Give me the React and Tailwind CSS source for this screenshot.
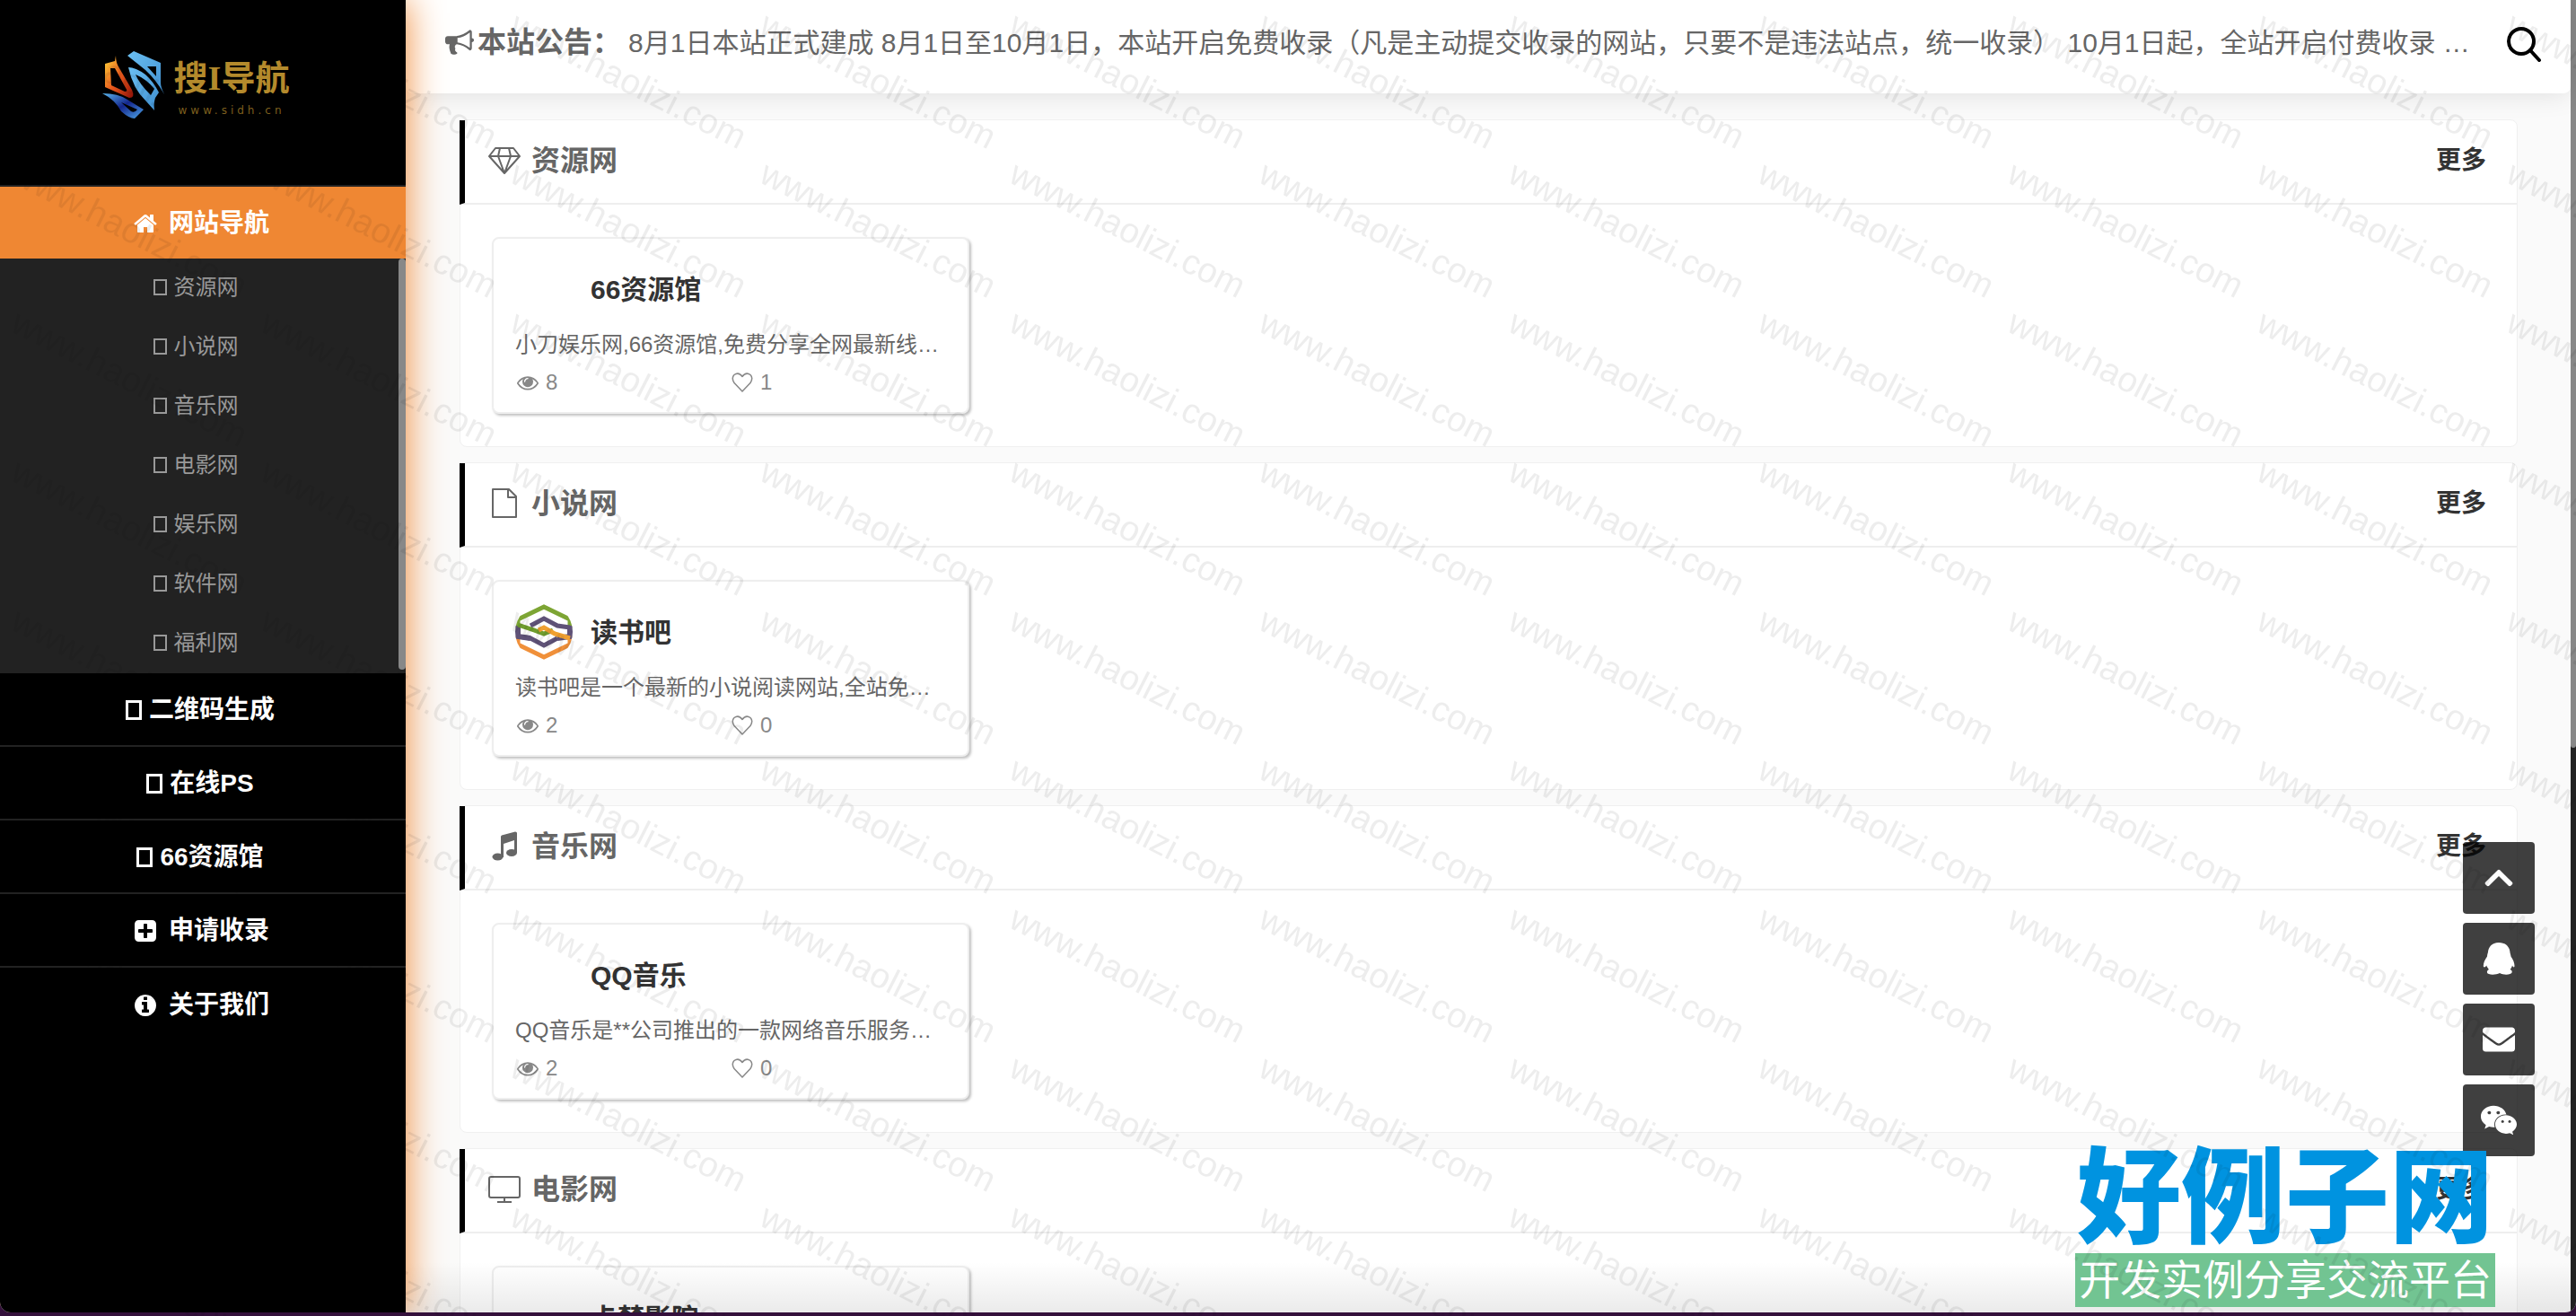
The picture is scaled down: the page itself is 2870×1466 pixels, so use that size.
import { FaChevronUp, FaEnvelope, FaWeixin } from 'react-icons/fa';

const SUB_LINKS = ['资源网', '小说网', '音乐网', '电影网', '娱乐网', '软件网', '福利网'];

const NAV_LINKS = [
  { label: '二维码生成' },
  { label: '在线PS' },
  { label: '66资源馆' },
  { label: '申请收录', icon: 'plus' },
  { label: '关于我们', icon: 'info' },
];

const SECTIONS = [
  {
    title: '资源网',
    icon: 'diamond',
    site: { name: '66资源馆', desc: '小刀娱乐网,66资源馆,免费分享全网最新线…', views: 8, likes: 1 },
  },
  {
    title: '小说网',
    icon: 'file',
    site: { name: '读书吧', desc: '读书吧是一个最新的小说阅读网站,全站免…', views: 2, likes: 0, logo: true },
  },
  {
    title: '音乐网',
    icon: 'music',
    site: { name: 'QQ音乐', desc: 'QQ音乐是**公司推出的一款网络音乐服务…', views: 2, likes: 0 },
  },
  {
    title: '电影网',
    icon: 'monitor',
    site: { name: '卡梦影院' },
  },
];

const QqIcon = (props) => (
  <svg viewBox="0 0 36 36" width="1em" height="1em" fill="currentColor" {...props}>
    <path d="M18 0c8 0 12 5 12.500 11c0 1 .8 2 1 4.500c2.500 3.500 4 7 4 10.500c0 2-1.500 2-2.500-.5c-.6 2-1.500 3.500-2.500 4.500c2 .8 2.500 2 2 3.500c-1 2.500-9 3-13.500 .5c-5 2.500-13.500 2-14 -.5c-.3-1.500 .2-2.700 2-3.500c-1.200-1.200-2.200-3-2.800-4.500c-1.200 2.500-3.400 2.500-3.400 .5c0-3.500 1.700-7 4.200-10.500c.1-2.500 .7-3.500 .9-4.500C6.500 5 10 0 18 0z" />
  </svg>
);

const FLOAT_BUTTONS = [
  { label: '返回顶部', Icon: FaChevronUp },
  { label: 'QQ', Icon: QqIcon },
  { label: '邮箱', Icon: FaEnvelope },
  { label: '微信', Icon: FaWeixin, large: true },
];

// Solid glyphs, all on a 1792 grid
const GLYPHS = {
  home: 'M1472 992v480q0 26-19 45t-45 19h-384v-384h-256v384h-384q-26 0-45-19t-19-45v-480q0-1 .5-3t.5-3l575-474 575 474q1 2 1 6zm223-69l-62 74q-8 9-21 11h-3q-13 0-21-7l-692-577-692 577q-12 8-24 7-13-2-21-11l-62-74q-8-10-7-23.5t11-21.5l719-599q32-26 76-26t76 26l244 204v-195q0-14 9-23t23-9h192q14 0 23 9t9 23v408l219 182q10 8 11 21.5t-7 23.5z',
  plus: 'M1408 960v-128q0-26-19-45t-45-19h-320v-320q0-26-19-45t-45-19h-128q-26 0-45 19t-19 45v320h-320q-26 0-45 19t-19 45v128q0 26 19 45t45 19h320v320q0 26 19 45t45 19h128q26 0 45-19t19-45v-320h320q26 0 45-19t19-45zm256-544v960q0 119-84.5 203.5t-203.5 84.500h-960q-119 0-203.5-84.500t-84.500-203.500v-960q0-119 84.500-203.500t203.500-84.500h960q119 0 203.500 84.500t84.500 203.500z',
  info: 'M1152 1376v-160q0-14-9-23t-23-9h-96v-512q0-14-9-23t-23-9h-320q-14 0-23 9t-9 23v160q0 14 9 23t23 9h96v320h-96q-14 0-23 9t-9 23v160q0 14 9 23t23 9h448q14 0 23-9t9-23zm-128-896v-160q0-14-9-23t-23-9h-192q-14 0-23 9t-9 23v160q0 14 9 23t23 9h192q14 0 23-9t9-23zm640 416q0 209-103 385.5t-279.5 279.5-385.5 103-385.5-103-279.5-279.5-103-385.5 103-385.5 279.5-279.5 385.5-103 385.5 103 279.5 279.5 103 385.5z',
  bullhorn: 'M1664 640q53 0 90.5 37.5t37.5 90.5-37.5 90.5-90.5 37.5v384q0 52-38 90t-90 38q-417-347-812-380-58 19-91 66t-31 100.5 40 92.5q-20 33-23 65.5t6 58 33.5 55 48 50 61.5 50.5q-29 58-111.5 83t-168.5 11.5-132-55.5q-7-23-29.5-87.5t-32-94.5-23-89-15-101 3.5-98.5 22-110.5h-122q-66 0-113-47t-47-113v-192q0-66 47-113t113-47h480q435 0 896-384 52 0 90 38t38 90v384zm-128 604v-954q-394 302-768 343v270q377 42 768 341z',
  eye: 'M1664 960q-152-236-381-353 61 104 61 225 0 185-131.5 316.5t-316.5 131.5-316.5-131.5-131.5-316.5q0-121 61-225-229 117-381 353 133 205 333.5 326.5t434.5 121.5 434.5-121.5 333.5-326.5zm-720-384q0-20-14-34t-34-14q-125 0-214.5 89.5t-89.5 214.5q0 20 14 34t34 14 34-14 14-34q0-86 61-147t147-61q20 0 34-14t14-34zm848 384q0 34-20 69-140 230-376.5 368.5t-499.5 138.5-499.5-139-376.5-368q-20-35-20-69t20-69q140-229 376.5-368t499.5-139 499.5 139 376.5 368q20 35 20 69z',
};

const Glyph = ({ name, className }) => (
  <svg viewBox="0 0 1792 1792" fill="currentColor" className={className} aria-hidden="true">
    <path d={GLYPHS[name]} />
  </svg>
);

// Thin outline icons used in the section headings
const SectionIcon = ({ name }) => (
  <svg viewBox="0 0 36 36" className="size-9" fill="none" stroke="currentColor" strokeWidth="2" strokeLinejoin="round" aria-hidden="true">
    {name === 'diamond' && <path d="M8 4h20l7 9-17 19L1 13zM1 13h34M13 4l-2 9 7 19 7-19-2-9" />}
    {name === 'file' && <path d="M5 2h18l8 8v23H5zM22 2v9h9" />}
    {name === 'music' && (
      <g fill="currentColor" stroke="none">
        <path d="M14 7q0-1 1-1.500l15-4q2 0 2 1.500v22h-3V11l-12 4v15h-3z" />
        <ellipse cx="10.500" cy="29.500" rx="6" ry="4" />
        <ellipse cx="26" cy="25" rx="6" ry="4" />
      </g>
    )}
    {name === 'monitor' && <path d="M3 4h30q2 0 2 2v19q0 2-2 2H3q-2 0-2-2V6q0-2 2-2zM18 27v5M10 32h16" />}
  </svg>
);

const HeartIcon = () => (
  <svg viewBox="0 0 24 24" className="size-6" fill="none" stroke="currentColor" strokeWidth="1.5" strokeLinejoin="round" aria-hidden="true">
    <path d="M12 22L3 12.500Q-.5 7 3 3.500q5-3.500 9 2q4-5.500 9-2q3.500 3.500 0 9z" />
  </svg>
);

const Tofu = ({ className }) => <span className={`inline-block border-current ${className}`} />;

const Logo = () => (
  <a href="#" className="flex h-[206px] items-center justify-center gap-2 pb-4 pr-4">
    <svg viewBox="0 0 72 76" className="h-[76px] w-[72px]" aria-hidden="true">
      <defs>
        <linearGradient id="fire" x1="0" y1="0" x2="1" y2="1">
          <stop offset="0" stopColor="#ffd83a" />
          <stop offset=".5" stopColor="#e8591c" />
          <stop offset="1" stopColor="#8d1008" />
        </linearGradient>
        <linearGradient id="deep" x1="0" y1="0" x2="1" y2="1">
          <stop offset="0" stopColor="#5bb8f0" />
          <stop offset=".5" stopColor="#14268c" />
          <stop offset="1" stopColor="#4fa8ea" />
        </linearGradient>
        <linearGradient id="sky" x1="0" y1="0" x2="1" y2="1">
          <stop offset="0" stopColor="#6cc0f2" />
          <stop offset="1" stopColor="#3f8fd0" />
        </linearGradient>
      </defs>
      <path fillRule="evenodd" fill="url(#fire)" d="M15 5q0 8 4 14l14 24q4 9-3 9L3 40V14l11-3zM9 19l1 19 15 7q4 0 1-4l-12-22z" />
      <path fillRule="evenodd" fill="url(#sky)" d="M35 0L65 13v22q0 5 4 13Q60 32 48 21L28 5zM50 17l10 11V17z" />
      <path fillRule="evenodd" fill="url(#sky)" d="M29 18q8 0 19 8q9 8 15 20l-4 6q-2 6-1 14l-9-10Q34 42 29 18zM37 26q4 10 17 23l4-7q-9-11-21-16z" />
      <path fillRule="evenodd" fill="url(#deep)" d="M0 47q18 0 28 7l18 11-10 10q-6 0-15-8Q14 54 0 47zM21 57l11 10q4 2 7-2z" />
    </svg>
    <span className="flex flex-col items-center gap-1 pt-1">
      <span className="font-['Liberation_Serif','Noto_Sans_CJK_SC',serif] text-[38px] leading-[48px] font-bold text-[#b48a2c]">搜I导航</span>
      <span className="font-['DejaVu_Sans',sans-serif] text-xs tracking-[4px] text-[#7d5f1e]">www.sidh.cn</span>
    </span>
  </a>
);

const Sidebar = () => (
  <aside className="relative z-20 w-[452px] shrink-0 bg-black text-center shadow-[0_0_40px_#ef8733]">
    <Logo />
    <nav>
      <a href="#" className="flex h-[82px] items-center justify-center gap-3 border-t-2 border-[#222] bg-[#ef8733] pr-1 pt-0.5 text-[28px] font-bold text-white">
        <Glyph name="home" className="size-7" />
        网站导航
      </a>
      <div className="relative bg-[#222]">
        {SUB_LINKS.map((label) => (
          <a key={label} href="#" className="flex h-[66px] items-center justify-center gap-2 pb-0.5 pr-4 text-2xl text-[#999]">
            <Tofu className="h-[18px] w-[15px] border-2" />
            {label}
          </a>
        ))}
        <span className="absolute inset-y-0 right-0 mb-1 w-2 rounded-full bg-[#888]" />
      </div>
      {NAV_LINKS.map(({ label, icon }) => (
        <a
          key={label}
          href="#"
          className={`flex h-[82px] items-center justify-center border-b-2 border-[#222] pt-0.5 text-[28px] font-bold text-white last:border-0 ${icon ? 'gap-3 pr-1' : 'gap-2 pr-1.5'}`}
        >
          {icon ? <Glyph name={icon} className="size-7" /> : <Tofu className="h-[22px] w-[18px] border-3" />}
          {label}
        </a>
      ))}
    </nav>
  </aside>
);

const Header = () => (
  <header className="relative z-10 flex h-[104px] items-center rounded-b-lg bg-white pb-2.5 pl-11 pr-8 shadow-[0_0_30px_rgba(0,0,0,0.12)]">
    <Glyph name="bullhorn" className="size-8 shrink-0" />
    <strong className="ml-1 shrink-0 text-[32px]">本站公告：</strong>
    <p className="min-w-0 flex-1 truncate pl-2 text-[30px]">
      8月1日本站正式建成 8月1日至10月1日，本站开启免费收录（凡是主动提交收录的网站，只要不是违法站点，统一收录） 10月1日起，全站开启付费收录 …
    </p>
    <button aria-label="搜索" className="shrink-0 pt-1 text-black">
      <svg viewBox="0 0 40 40" className="size-10" fill="none" stroke="currentColor" strokeWidth="4" strokeLinecap="round" aria-hidden="true">
        <circle cx="17" cy="17" r="14" />
        <path d="M27 27l10 11" />
      </svg>
    </button>
  </header>
);

const BookLogo = () => (
  <svg viewBox="0 0 64 64" className="size-16 rounded-full" fill="none" strokeWidth="5" aria-hidden="true">
    <path d="M3 28V18L32 4l29 14v10" stroke="#7da534" />
    <path d="M3 36v10l29 14 29-14V36" stroke="#f0903a" />
    <path d="M3 25v12l14 2M61 25v12l-14 2" stroke="#5f5277" strokeWidth="6" />
    <path d="M17 25l15-8 15 8 14 2M3 37l14 2 15 8 15-8" stroke="#5f5277" />
    <path d="M3 24l18 6 11 4 10-4" stroke="#6f9d2d" />
    <path d="M26 30l6-3 12 7 17 5" stroke="#f0a030" />
  </svg>
);

const SiteCard = ({ site }) => (
  <a href="#" className="block h-[197px] w-[532px] rounded-lg border-2 border-[#eee] bg-white px-6 pt-5 shadow-[2px_2px_3px_rgba(0,0,0,0.25)]">
    <span className="flex h-[72px] items-center gap-5">
      <span className="size-16">{site.logo && <BookLogo />}</span>
      <span className="text-[30px] font-bold text-[#333]">{site.name}</span>
    </span>
    {site.desc && (
      <>
        <span className="block whitespace-nowrap text-2xl leading-[52px] text-[#666]">{site.desc}</span>
        <span className="grid grid-cols-2 pl-0.5 text-2xl text-[#888]">
          <span className="flex items-center gap-2">
            <Glyph name="eye" className="size-6" />
            {site.views}
          </span>
          <span className="flex items-center gap-2">
            <HeartIcon />
            {site.likes}
          </span>
        </span>
      </>
    )}
  </a>
);

const Section = ({ title, icon, site }) => (
  <section className="rounded-lg border border-[#f0f0f0] bg-white">
    <div className="-ml-px flex h-[94px] items-center justify-between border-b-2 border-l-[6px] border-b-[#eee] border-l-black pb-0.5 pl-[26px] pr-[34px]">
      <h2 className="flex items-center gap-3 text-[32px] font-bold">
        <SectionIcon name={icon} />
        {title}
      </h2>
      <a href="#" className="text-[28px] font-bold text-[#333]">更多</a>
    </div>
    <div className="pb-9 pl-[35px] pt-9">
      <SiteCard site={site} />
    </div>
  </section>
);

const Watermark = () => (
  <svg className="pointer-events-none absolute inset-0 z-40 size-full" aria-hidden="true">
    <defs>
      <pattern id="mark" x="6" y="10" width="278" height="166" patternUnits="userSpaceOnUse">
        <text transform="translate(4 26) rotate(27)" fontSize="39" fill="#000" fillOpacity=".07" fontFamily="Liberation Sans, sans-serif">
          www.haolizi.com
        </text>
      </pattern>
    </defs>
    <rect width="100%" height="100%" fill="url(#mark)" />
  </svg>
);

export default function App() {
  return (
    <div className="relative flex h-screen flex-col overflow-hidden bg-[#34103b] font-['Liberation_Sans','Noto_Sans_CJK_SC',sans-serif] text-[#666]">
      <div className="flex min-h-0 flex-1 overflow-hidden rounded-b-xl bg-[#fafafa]">
        <Sidebar />
        <div className="min-w-0 flex-1">
          <Header />
          <main className="flex flex-col gap-[17px] pl-[60px] pr-[59px] pt-[29px]">
            {SECTIONS.map((section) => (
              <Section key={section.title} {...section} />
            ))}
          </main>
        </div>
        <div className="w-[6px] bg-[#222]">
          <div className="h-[57%] rounded-b-full bg-[#888]" />
        </div>
      </div>
      <div className="h-1 shrink-0" />

      <div className="absolute bottom-1 left-[452px] right-0 z-10 h-14 bg-linear-to-b from-transparent to-black/8" />

      <div className="absolute bottom-[178px] right-[46px] z-30 flex flex-col gap-[10px]">
        {FLOAT_BUTTONS.map(({ label, Icon, large }) => (
          <button
            key={label}
            aria-label={label}
            className={`flex size-20 items-center justify-center rounded bg-black/75 text-white ${large ? 'text-[42px]' : 'text-4xl'}`}
          >
            <Icon aria-hidden="true" />
          </button>
        ))}
      </div>

      <div className="absolute bottom-[10px] right-[90px] z-30 flex flex-col items-center text-center">
        <span className="font-['Liberation_Serif','Noto_Sans_CJK_SC',serif] text-[116px] font-black leading-[120px] text-[#0093e0]">好例子网</span>
        <span className="w-full bg-[#72c492] px-1 text-[46px] leading-[60px] text-white">开发实例分享交流平台</span>
      </div>
      <Watermark />
    </div>
  );
}
